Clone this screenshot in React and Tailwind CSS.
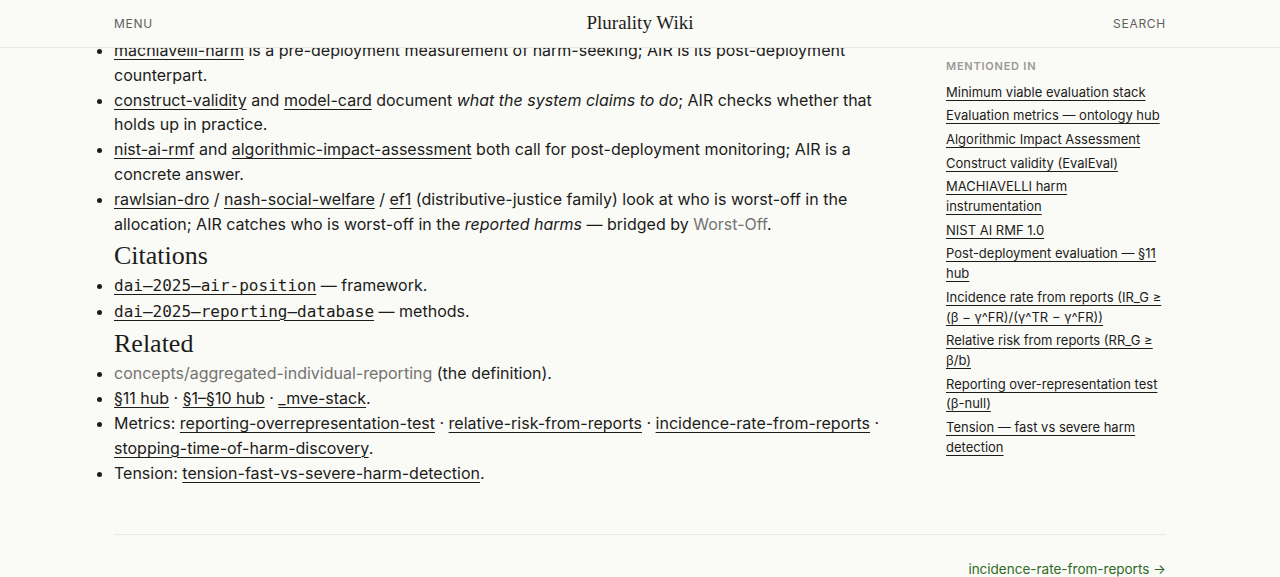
import React from 'react';

const mentionedIn = [
  "Minimum viable evaluation stack",
  "Evaluation metrics — ontology hub",
  "Algorithmic Impact Assessment",
  "Construct validity (EvalEval)",
  "MACHIAVELLI harm instrumentation",
  "NIST AI RMF 1.0",
  "Post-deployment evaluation — §11 hub",
  "Incidence rate from reports (IR_G ≥ (β − γ^FR)/(γ^TR − γ^FR))",
  "Relative risk from reports (RR_G ≥ β/b)",
  "Reporting over-representation test (β-null)",
  "Tension — fast vs severe harm detection",
];

const A = ({ children }) => (
  <a href="#" className="underline decoration-1 underline-offset-[3px] text-[#1c1c1a]">
    {children}
  </a>
);

const Muted = ({ children }) => (
  <a href="#" className="text-[#737370]">{children}</a>
);

// citation keys are set in mono; leading-none keeps them from stretching the line box
const Code = ({ children }) => (
  <a href="#" className="underline decoration-1 underline-offset-[3px] font-['DejaVu_Sans_Mono',monospace] text-[16px] leading-none">
    {children}
  </a>
);

const Heading = ({ children }) => (
  <h2 className="font-['Liberation_Serif',serif] text-[26px] leading-[31px] mt-1 mb-0.5 text-[#1c1c1a]">
    {children}
  </h2>
);

const App = () => {
  return (
    <div className="min-h-screen bg-[#fafaf7] text-[#1c1c1a] font-['Inter',sans-serif]">
      <header className="fixed top-0 inset-x-0 h-12 bg-[#fafaf7] border-b border-[#e6e6e2] z-10">
        <div className="max-w-[1052px] mx-auto h-full flex items-center justify-between">
          <a href="#" className="text-[12px] tracking-[0.06em] text-[#5f5f5c] w-20">MENU</a>
          <a href="#" className="font-['Liberation_Serif',serif] text-[19px] text-[#222]">Plurality Wiki</a>
          <a href="#" className="text-[12px] tracking-[0.06em] text-[#5f5f5c] w-20 text-right">SEARCH</a>
        </div>
      </header>

      <div className="max-w-[1052px] mx-auto pt-[38px]">
        <div className="flex justify-between">
          <main className="w-[770px] text-[16px] leading-[24.8px]">
            <ul className="list-disc">
              <li>
                <A>machiavelli-harm</A> is a pre-deployment measurement of harm-seeking; AIR is its post-deployment counterpart.
              </li>
              <li>
                <A>construct-validity</A> and <A>model-card</A> document <em>what the system claims to do</em>; AIR checks whether that holds up in practice.
              </li>
              <li>
                <A>nist-ai-rmf</A> and <A>algorithmic-impact-assessment</A> both call for post-deployment monitoring; AIR is a concrete answer.
              </li>
              <li>
                <A>rawlsian-dro</A> / <A>nash-social-welfare</A> / <A>ef1</A> (distributive-justice family) look at who is worst-off in the allocation; AIR catches who is worst-off in the <em>reported harms</em> — bridged by <Muted>Worst-Off</Muted>.
              </li>
            </ul>

            <Heading>Citations</Heading>
            <ul className="list-disc leading-[25.5px]">
              <li><Code>dai–2025–air-position</Code> — framework.</li>
              <li><Code>dai–2025–reporting–database</Code> — methods.</li>
            </ul>

            <Heading>Related</Heading>
            <ul className="list-disc">
              <li><Muted>concepts/aggregated-individual-reporting</Muted> (the definition).</li>
              <li><A>§11 hub</A> · <A>§1–§10 hub</A> · <A>_mve-stack</A>.</li>
              <li>
                Metrics: <A>reporting-overrepresentation-test</A> · <A>relative-risk-from-reports</A> · <A>incidence-rate-from-reports</A> · <A>stopping-time-of-harm-discovery</A>.
              </li>
              <li>Tension: <A>tension-fast-vs-severe-harm-detection</A>.</li>
            </ul>
          </main>

          <aside className="w-[220px] pt-[20px]">
            <div className="text-[11px] font-semibold tracking-[0.07em] text-[#999996] mb-[8px]">MENTIONED IN</div>
            <div className="flex flex-col gap-1 text-[13px] leading-[19.7px]">
              {mentionedIn.map(item => (
                <a key={item} href="#" className="underline decoration-1 underline-offset-[3px] text-[#1c1c1a]">
                  {item}
                </a>
              ))}
            </div>
          </aside>
        </div>

        <footer className="mt-[49px] border-t border-[#e8e8e4] pt-[24px] flex justify-end">
          <a href="#" className="text-[13.5px] text-[#2f6b24]">incidence-rate-from-reports →</a>
        </footer>
      </div>
    </div>
  );
};

export default App;
